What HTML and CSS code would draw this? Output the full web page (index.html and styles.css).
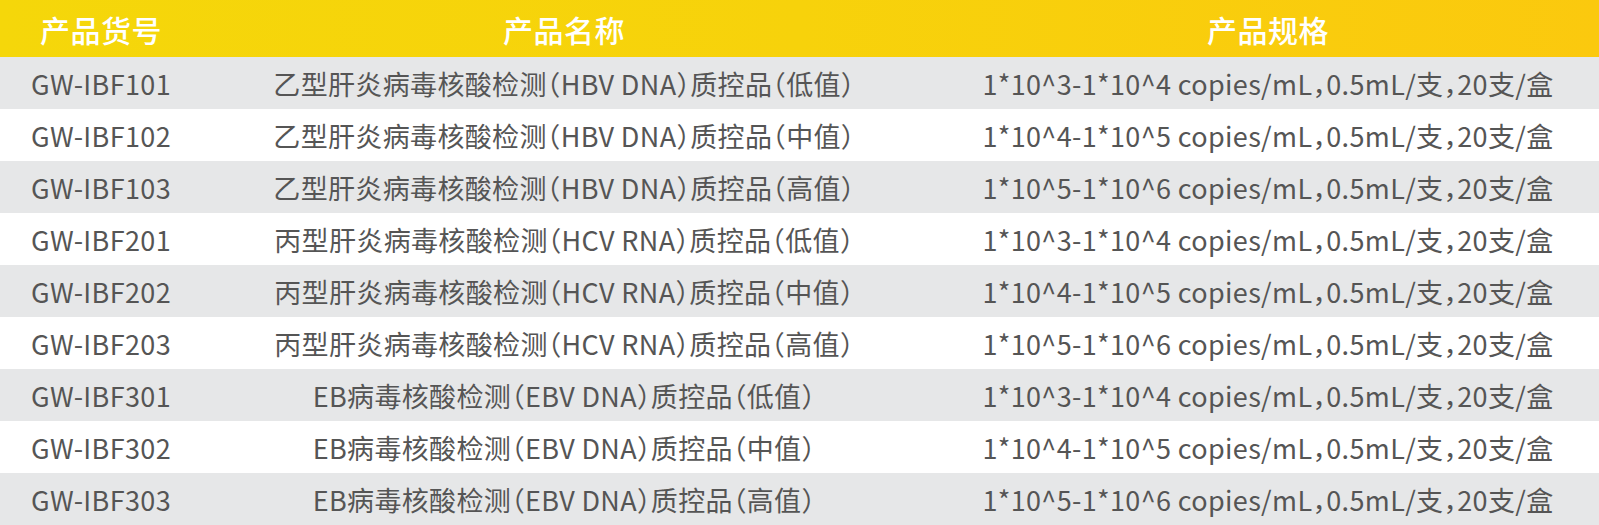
FILE: index.html
```html
<!DOCTYPE html>
<html lang="zh-CN">
<head>
<meta charset="utf-8">
<link rel="stylesheet" href="styles.css">
</head>
<body>
<div class="spec">
  <div class="row head">
    <div class="cell">产品货号</div>
    <div class="cell">产品名称</div>
    <div class="cell">产品规格</div>
  </div>
  <div class="row odd"><div class="cell">GW-IBF101</div><div class="cell">乙型肝炎病毒核酸检测（HBV DNA）质控品（低值）</div><div class="cell">1*10^3-1*10^4 copies/mL，0.5mL/支，20支/盒</div></div>
  <div class="row"><div class="cell">GW-IBF102</div><div class="cell">乙型肝炎病毒核酸检测（HBV DNA）质控品（中值）</div><div class="cell">1*10^4-1*10^5 copies/mL，0.5mL/支，20支/盒</div></div>
  <div class="row odd"><div class="cell">GW-IBF103</div><div class="cell">乙型肝炎病毒核酸检测（HBV DNA）质控品（高值）</div><div class="cell">1*10^5-1*10^6 copies/mL，0.5mL/支，20支/盒</div></div>
  <div class="row"><div class="cell">GW-IBF201</div><div class="cell">丙型肝炎病毒核酸检测（HCV RNA）质控品（低值）</div><div class="cell">1*10^3-1*10^4 copies/mL，0.5mL/支，20支/盒</div></div>
  <div class="row odd"><div class="cell">GW-IBF202</div><div class="cell">丙型肝炎病毒核酸检测（HCV RNA）质控品（中值）</div><div class="cell">1*10^4-1*10^5 copies/mL，0.5mL/支，20支/盒</div></div>
  <div class="row"><div class="cell">GW-IBF203</div><div class="cell">丙型肝炎病毒核酸检测（HCV RNA）质控品（高值）</div><div class="cell">1*10^5-1*10^6 copies/mL，0.5mL/支，20支/盒</div></div>
  <div class="row odd"><div class="cell">GW-IBF301</div><div class="cell">EB病毒核酸检测（EBV DNA）质控品（低值）</div><div class="cell">1*10^3-1*10^4 copies/mL，0.5mL/支，20支/盒</div></div>
  <div class="row"><div class="cell">GW-IBF302</div><div class="cell">EB病毒核酸检测（EBV DNA）质控品（中值）</div><div class="cell">1*10^4-1*10^5 copies/mL，0.5mL/支，20支/盒</div></div>
  <div class="row odd"><div class="cell">GW-IBF303</div><div class="cell">EB病毒核酸检测（EBV DNA）质控品（高值）</div><div class="cell">1*10^5-1*10^6 copies/mL，0.5mL/支，20支/盒</div></div>
</div>
</body>
</html>
```
FILE: styles.css
```css
html, body {
  margin: 0;
  padding: 0;
  background: #ffffff;
}
body {
  font-family: "Noto Sans CJK SC", "Noto Sans", sans-serif;
  color: #555555;
}
.spec {
  width: 1599px;
  display: flex;
  flex-direction: column;
}
.row {
  display: grid;
  grid-template-columns: 202px 724px 1fr;
  height: 52px;
  align-items: center;
  font-size: 27px;
  letter-spacing: 0.35px;
  white-space: nowrap;
  font-feature-settings: "halt";
}
.row.odd {
  background: #e6e7e8;
}
.row.head {
  height: 57px;
  background: linear-gradient(90deg, #f5d70a 0%, #f7d20b 50%, #fbc90e 100%);
  color: #ffffff;
  font-size: 30px;
  font-weight: 500;
  letter-spacing: 0.5px;
}
.cell {
  text-align: center;
}
.cell:nth-child(3) {
  padding-left: 11px;
}
```
